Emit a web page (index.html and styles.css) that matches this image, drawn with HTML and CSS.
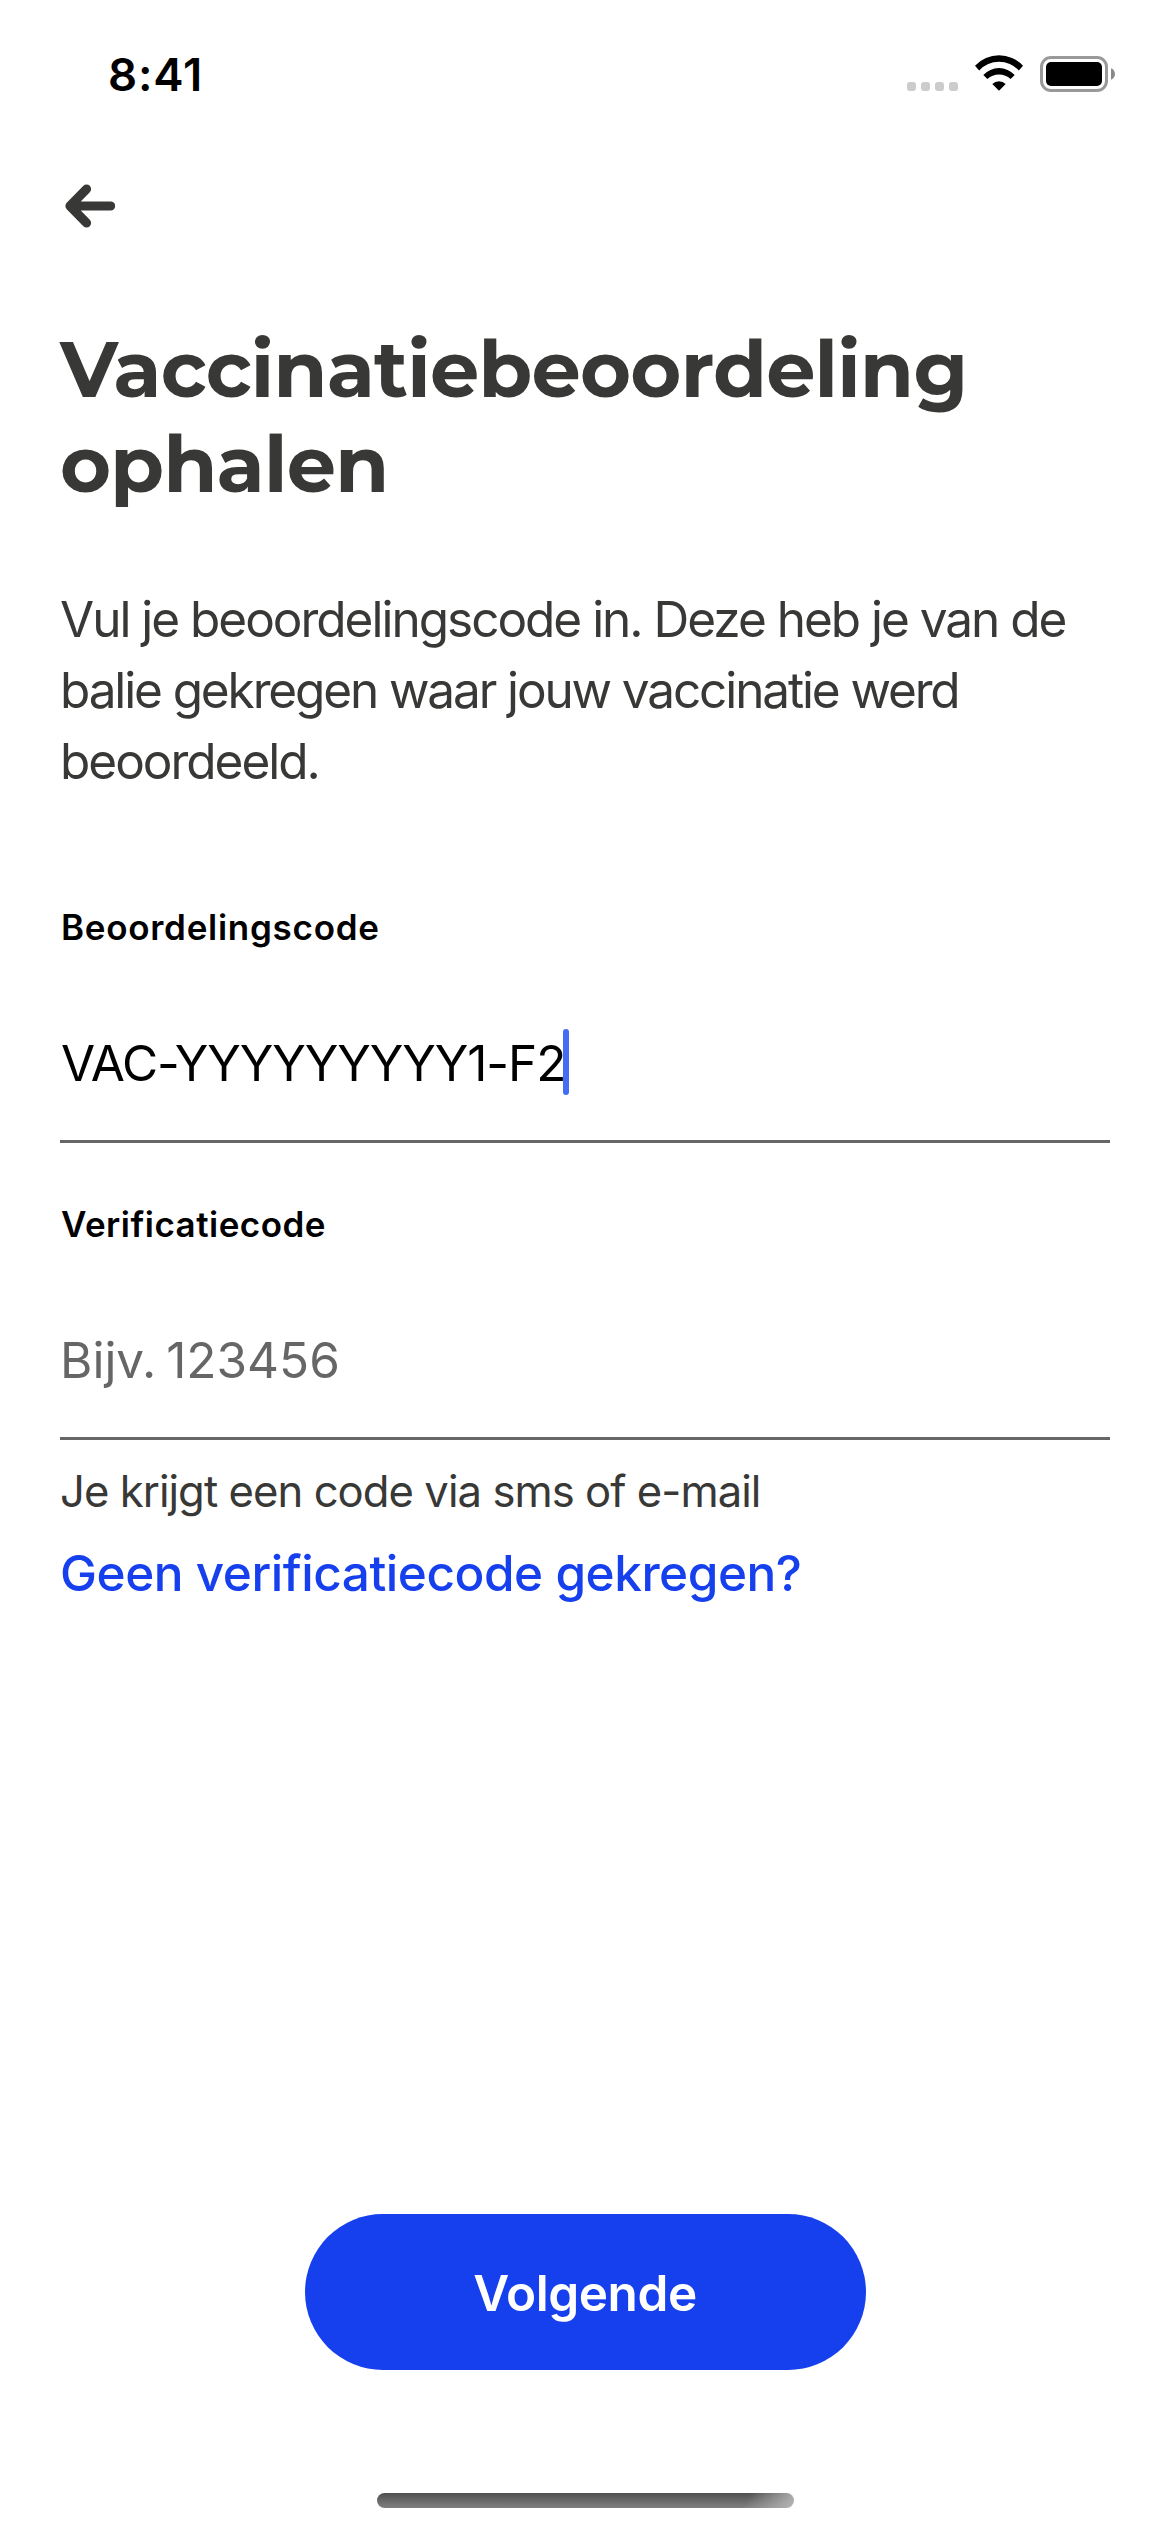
FILE: index.html
```
<!DOCTYPE html>
<html lang="nl">
<head>
<meta charset="utf-8">
<meta name="viewport" content="width=device-width">
<title>Vaccinatiebeoordeling ophalen</title>
<link rel="stylesheet" href="styles.css">
</head>
<body>
<div class="screen">
  <header class="status-bar">
    <span class="time">8:41</span>
    <div class="indicators">
      <div class="signal"><i></i><i></i><i></i><i></i></div>
      <svg class="wifi" viewBox="0 0 50 38" width="50" height="38" aria-hidden="true">
        <path d="M1 11.7A32.9 32.9 0 0 1 49 11.7L44.8 16.4A27 27 0 0 0 5.2 16.4Z"/>
        <path d="M9.3 21A21.3 21.3 0 0 1 40.7 21L36.6 25A17 17 0 0 0 13.4 25Z"/>
        <path d="M18.3 29.9A10 10 0 0 1 31.7 29.9L25 36.8Z"/>
      </svg>
      <svg class="battery" viewBox="0 0 75 36" width="75" height="36" aria-hidden="true">
        <rect x="1.5" y="1.5" width="65" height="33" rx="9.5" fill="none" stroke="#999" stroke-width="3"/>
        <rect x="6" y="6" width="56" height="24" rx="5"/>
        <path d="M71 12.3C76.3 14.5 76.3 21.5 71 23.7Z" fill="#888"/>
      </svg>
    </div>
  </header>
  <nav class="nav">
    <svg class="back" viewBox="0 0 50 44" width="50" height="44" role="img" aria-label="Terug">
      <path d="M21.6 5L4.9 22L21.6 39M5.5 22H45.7" fill="none" stroke="#383836" stroke-width="9" stroke-linecap="round" stroke-linejoin="round"/>
    </svg>
  </nav>
  <main class="content">
    <h1 class="title">Vaccinatiebeoordeling ophalen</h1>
    <p class="intro">Vul je beoordelingscode in. Deze heb je van de <span class="tight">balie gekregen waar jouw vaccinatie werd</span> beoordeeld.</p>
    <section class="field">
      <div class="label label-review">Beoordelingscode</div>
      <div class="input"><span class="value">VAC-YYYYYYYYY1-F2</span><span class="caret"></span></div>
    </section>
    <section class="field field-next">
      <div class="label">Verificatiecode</div>
      <div class="input"><span class="placeholder">Bijv. 123456</span></div>
    </section>
    <p class="hint">Je krijgt een code via sms of e-mail</p>
    <a class="link">Geen verificatiecode gekregen?</a>
  </main>
  <footer class="footer">
    <button class="button" type="button">Volgende</button>
    <div class="home-indicator"></div>
  </footer>
</div>
</body>
</html>
```
FILE: styles.css
```
* {
  box-sizing: border-box;
}

body {
  margin: 0;
  background: #fff;
  color: #383836;
  font-family: "Inter", "Liberation Sans", sans-serif;
}

.screen {
  display: flex;
  flex-direction: column;
  width: 1170px;
  height: 2532px;
}

.status-bar {
  display: flex;
  justify-content: space-between;
  height: 141px;
  padding: 46px 55px 0 108px;
  color: #000;
}

.time {
  font-size: 45.5px;
  font-weight: 600;
  line-height: 57px;
  letter-spacing: 0.84px;
}

.indicators {
  display: flex;
  align-items: flex-start;
  padding-top: 9px;
}

.signal {
  display: flex;
  gap: 5px;
  margin: 27px 16px 0 0;
}

.signal i {
  width: 9px;
  height: 9px;
  border-radius: 3px;
  background: #ccc;
}

.wifi {
  margin: -1px 16px 0 0;
}

.battery {
  margin-top: 1px;
}

.nav {
  height: 129px;
  padding: 43px 65px 0;
}

.back {
  display: block;
}

.content {
  flex: 1;
  padding: 52px 60px 0;
}

.title {
  margin: 0;
  font-family: "Montserrat", "Inter", sans-serif;
  font-size: 78px;
  font-weight: 700;
  line-height: 95px;
  letter-spacing: -0.74px;
}

.intro {
  width: 1020px;
  margin: 72px 0 0;
  font-size: 49.5px;
  line-height: 71px;
  letter-spacing: -2.01px;
}

.tight {
  letter-spacing: -2.12px;
}

.field {
  margin-top: 109px;
}

.field-next {
  margin-top: 60px;
}

.label {
  padding-left: 1px;
  color: #000;
  font-size: 35px;
  font-weight: 600;
  line-height: 42px;
  letter-spacing: 0.48px;
}

.label-review {
  letter-spacing: 0.72px;
}

.input {
  display: flex;
  height: 195px;
  padding: 85px 0 0 1px;
  border-bottom: 3px solid #666;
  font-size: 49.5px;
  line-height: 60px;
}

.value {
  width: 502px;
  color: #000;
  letter-spacing: -1.1px;
  white-space: nowrap;
}

.caret {
  width: 6px;
  height: 66px;
  margin-top: -4px;
  border-radius: 3px;
  background: #456cf5;
}

.placeholder {
  margin-left: -1px;
  color: #666;
  letter-spacing: 0;
  word-spacing: -4px;
}

.hint {
  margin: 25px 0 0;
  font-size: 43.6px;
  line-height: 54px;
  letter-spacing: -0.94px;
}

.link {
  display: block;
  margin: 24px 0 0;
  color: #1640ee;
  font-size: 49.5px;
  font-weight: 500;
  line-height: 60px;
  letter-spacing: -0.47px;
}

.footer {
  display: flex;
  flex-direction: column;
  align-items: center;
  gap: 123px;
  padding-bottom: 24px;
}

.button {
  width: 561px;
  height: 156px;
  padding: 2px 0 0;
  border: 0;
  border-radius: 78px;
  background: #1640ee;
  color: #fff;
  font-family: inherit;
  font-size: 49.5px;
  font-weight: 600;
  line-height: 60px;
  letter-spacing: -0.4px;
}

.home-indicator {
  width: 417px;
  height: 15px;
  border-radius: 8px;
  background:
    linear-gradient(115deg, transparent 88%, #b5b5b5 100%),
    linear-gradient(#505050, #808080);
}
```
